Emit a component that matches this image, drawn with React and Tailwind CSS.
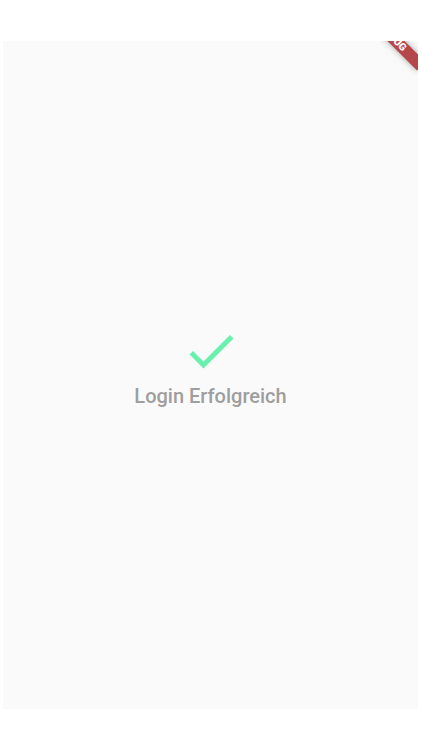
import React from "react";

export default function App() {
  return (
    <div className="w-[422px] h-[750px] bg-white pt-[41px] pl-[3px]" style={{ fontFamily: "Roboto, 'Noto Sans', sans-serif" }}>
      <div className="relative w-[415px] h-[668px] bg-[#fafafa] overflow-hidden flex flex-col items-center pt-[280px]">
        <svg width="60" height="60" viewBox="0 0 24 24" className="block">
          <path d="M9 16.17L4.83 12l-1.42 1.41L9 19 21 7l-1.41-1.41z" fill="#69f0ae" />
        </svg>
        <div className="mt-[3px] text-[20px] leading-[24px] font-medium text-[#9e9e9e]">Login Erfolgreich</div>
        <div className="absolute left-[350px] top-[-9px] w-[80px] h-[12px] rotate-45 bg-[#b5474b] shadow-[0_0_6px_rgba(0,0,0,0.35)] flex items-center justify-center">
          <span className="text-white text-[10.2px] leading-[12px] font-black tracking-normal">DEBUG</span>
        </div>
      </div>
    </div>
  );
}
